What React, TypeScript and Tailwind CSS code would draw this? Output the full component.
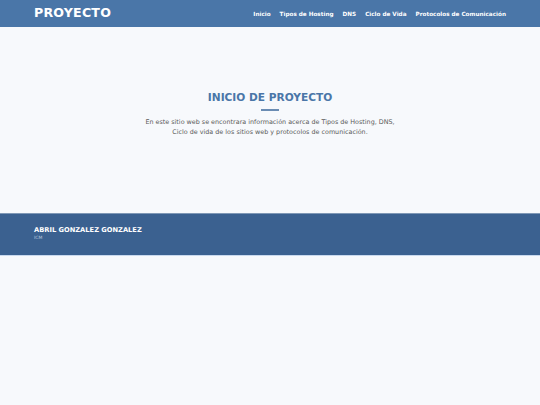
export default function App() {
  const links = ['Inicio', 'Tipos de Hosting', 'DNS', 'Ciclo de Vida', 'Protocolos de Comunicación']

  return (
    <div className="min-h-[405px] bg-[#f7f9fc] font-['DejaVu_Sans',Verdana,sans-serif]">
      <header className="flex h-[27px] items-center justify-between bg-[#4a76a8] pl-[34px] pr-[34px]">
        <h1 className="text-[12.6px] font-bold tracking-[0.2px] text-white">PROYECTO</h1>
        <nav className="flex items-center gap-[9px] pt-[1px]">
          {links.map((link) => (
            <a key={link} href="#" className="text-[5.7px] font-bold text-white">
              {link}
            </a>
          ))}
        </nav>
      </header>

      <main className="flex h-[186px] flex-col items-center pt-[63px]">
        <h2 className="text-[10.6px] font-bold leading-[14px] text-[#4a76a8]">INICIO DE PROYECTO</h2>
        <div className="mt-[5px] h-[2px] w-[18px] bg-[#6a8cb3]" />
        <p className="mt-[6px] text-center text-[6.4px] leading-[10px] text-[#5a5a5a]">
          En este sitio web se encontrara información acerca de Tipos de Hosting, DNS,
          <br />
          Ciclo de vida de los sitios web y protocolos de comunicación.
        </p>
      </main>

      <footer className="h-[43px] border-b border-t border-b-[#c9d9ee] border-t-[#7f98b6] bg-[#3b6190] pl-[34px] pt-[12px]">
        <div className="text-[6.7px] font-bold leading-[9px] text-white">ABRIL GONZALEZ GONZALEZ</div>
        <div className="text-[4.5px] leading-[6px] text-[#b8c8dc]">ICM</div>
      </footer>
    </div>
  )
}
